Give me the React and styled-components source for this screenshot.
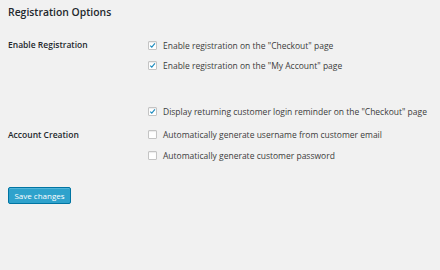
import React from 'react';
import styled, { createGlobalStyle } from 'styled-components';

const GlobalStyle = createGlobalStyle`
  html, body {
    margin: 0;
    padding: 0;
    background: #f1f1f1;
  }
  body {
    font-family: "Open Sans", "Liberation Sans", sans-serif;
    color: #444;
  }
`;

const Page = styled.div`
  width: 440px;
  height: 270px;
  padding: 0 8px;
  box-sizing: border-box;
  background: #f1f1f1;
`;

const Title = styled.h2`
  margin: 0;
  padding-top: 4px;
  height: 20px;
  font-size: 10.4px;
  font-weight: 600;
  line-height: 16px;
  color: #23282d;
`;

const Row = styled.div`
  display: flex;
  margin-top: ${p => p.top}px;
`;

const Label = styled.div`
  width: 140px;
  flex: none;
  font-size: 8.5px;
  font-weight: 600;
  line-height: 20px;
  color: #23282d;
`;

const Options = styled.div`
  display: flex;
  flex-direction: column;
`;

const Option = styled.label`
  display: flex;
  align-items: center;
  height: 20.5px;
  font-size: 8.5px;
  color: #3c3c3c;
`;

const Box = styled.span`
  width: 9px;
  height: 9px;
  box-sizing: border-box;
  border: 1px solid #c4c4c4;
  border-radius: 1px;
  background: #fff;
  box-shadow: inset 0 1px 1px rgba(0, 0, 0, 0.08);
  margin-right: 6px;
  display: flex;
  align-items: center;
  justify-content: center;
`;

const Footer = styled.div`
  margin-top: 16px;
`;

const Button = styled.button`
  width: 63px;
  height: 17px;
  padding: 0;
  border: 1px solid #0074a2;
  border-radius: 2px;
  background: #2ea2cc;
  box-shadow: inset 0 1px 0 rgba(120, 200, 230, 0.5);
  color: #fff;
  font-family: "Open Sans", "Liberation Sans", sans-serif;
  font-size: 8px;
`;

const Check = () => (
  <svg width="9" height="9" viewBox="0 0 9 9">
    <path d="M1.6 4.6 L3.6 6.6 L7.6 1.8" fill="none" stroke="#1e8cbe" strokeWidth="1.5" />
  </svg>
);

const Opt = ({ checked, children }) => (
  <Option>
    <Box>{checked && <Check />}</Box>
    {children}
  </Option>
);

export default function App() {
  return (
    <Page>
      <GlobalStyle />
      <Title>Registration Options</Title>
      <Row top={11}>
        <Label>Enable Registration</Label>
        <Options>
          <Opt checked>Enable registration on the "Checkout" page</Opt>
          <Opt checked>Enable registration on the "My Account" page</Opt>
        </Options>
      </Row>
      <Row top={25}>
        <Label />
        <Options>
          <Opt checked>Display returning customer login reminder on the "Checkout" page</Opt>
        </Options>
      </Row>
      <Row top={3}>
        <Label>Account Creation</Label>
        <Options>
          <Opt>Automatically generate username from customer email</Opt>
          <Opt>Automatically generate customer password</Opt>
        </Options>
      </Row>
      <Footer>
        <Button>Save changes</Button>
      </Footer>
    </Page>
  );
}
